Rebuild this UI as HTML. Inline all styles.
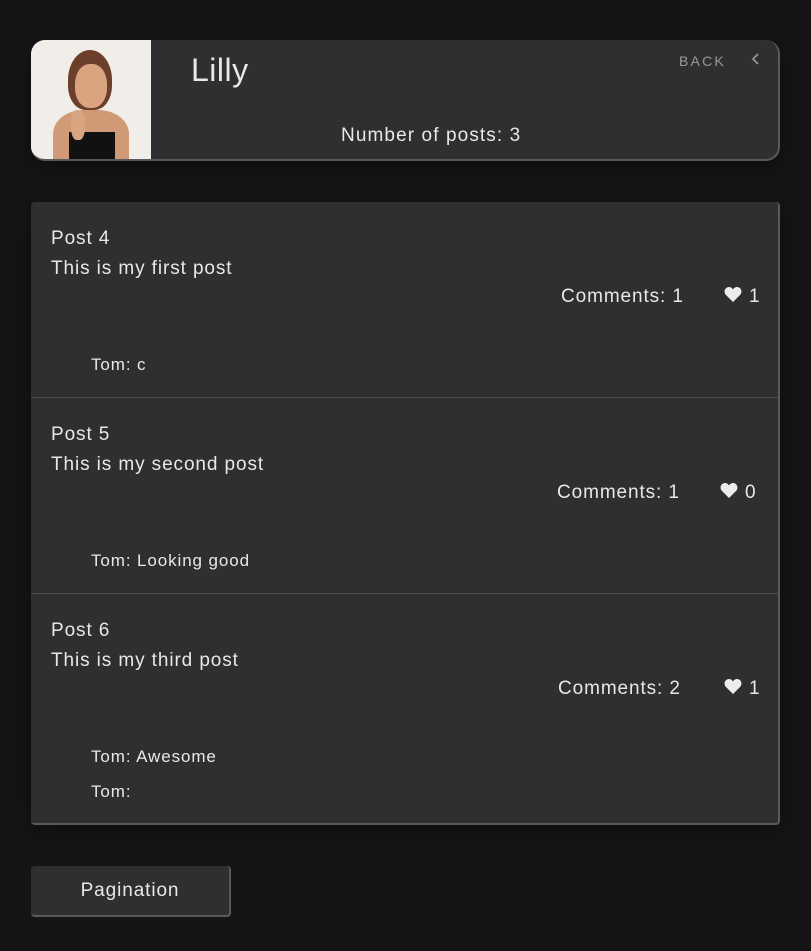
<!DOCTYPE html>
<html><head><style>
body{margin:0;background:#151517;width:811px;height:951px;font-family:"Liberation Sans",sans-serif;color:#e8e8ea;position:relative;overflow:hidden;letter-spacing:0.9px}
.hdr{position:absolute;left:31px;top:40px;width:747px;height:119px;background:#2f2f31;border-radius:14px;border-right:2px solid #5a5a5c;border-bottom:2px solid #5a5a5c;overflow:hidden;box-shadow:0 6px 20px rgba(0,0,0,.4)}
.av{position:absolute;left:0;top:0;width:120px;height:120px;background:#f1eeea;overflow:hidden}
.abs{position:absolute}
.posts{position:absolute;left:31px;top:202px;width:747px;height:621px;background:#2f2f31;border-radius:4px;border-right:2px solid #5a5a5c;border-bottom:2px solid #5a5a5c;box-shadow:0 6px 24px rgba(0,0,0,.4)}
.p{position:absolute;left:0;width:747px;height:195px;border-bottom:1px solid #4a4a4c}
.p .t{position:absolute;left:20px;top:22px;font-size:19px;line-height:30px}
.p .c{position:absolute;top:84px;font-size:19px}
.p .h{position:absolute;top:84px;font-size:19px}
.p .h svg{vertical-align:-1px;margin-right:7px}
.p .cm{position:absolute;left:60px;font-size:17px}
.btn{position:absolute;left:31px;top:866px;width:198px;height:49px;background:#2f2f31;border-radius:4px;border-right:2px solid #5a5a5c;border-bottom:2px solid #5a5a5c;font-size:19px;text-align:center;line-height:49px}
</style></head><body>
<div class="hdr">
 <div class="av">
  <div class="abs" style="left:37px;top:10px;width:44px;height:60px;background:#6b3f2a;border-radius:50% 50% 40% 40%"></div>
  <div class="abs" style="left:44px;top:24px;width:32px;height:44px;background:#d9a47f;border-radius:45%"></div>
  <div class="abs" style="left:22px;top:70px;width:76px;height:60px;background:#d09a76;border-radius:40% 40% 0 0"></div>
  <div class="abs" style="left:38px;top:92px;width:46px;height:40px;background:#111"></div>
  <div class="abs" style="left:40px;top:70px;width:14px;height:30px;background:#d8a580;border-radius:40%"></div>
 </div>
 <div class="abs" style="left:160px;top:12px;font-size:32px;letter-spacing:0.5px">Lilly</div>
 <div class="abs" style="left:310px;top:85px;font-size:19px;letter-spacing:1.1px">Number of posts: 3</div>
 <div class="abs" style="left:648px;top:13px;font-size:14px;color:#9a9a9c;letter-spacing:2.2px">BACK</div>
 <svg class="abs" style="left:720px;top:12px" width="10" height="14"><path d="M7 2 L2 7 L7 12" stroke="#9a9a9c" stroke-width="1.6" fill="none"/></svg>
</div>
<svg width="0" height="0" style="position:absolute"><defs><path id="hrt" d="M9 16 L2 9 C-1 6 1 1 5 1 C7 1 8.3 2.3 9 3.5 C9.7 2.3 11 1 13 1 C17 1 19 6 16 9 Z" fill="#ececee"/></defs></svg>
<div class="posts">
 <div class="p" style="top:0">
  <div class="t">Post 4<br>This is my first post</div>
  <div class="c" style="left:530px">Comments: 1</div>
  <div class="h" style="left:693px"><svg width="18" height="17" viewBox="0 0 18 17"><use href="#hrt"/></svg>1</div>
  <div class="cm" style="top:153px">Tom: c</div>
 </div>
 <div class="p" style="top:196px">
  <div class="t">Post 5<br>This is my second post</div>
  <div class="c" style="left:526px">Comments: 1</div>
  <div class="h" style="left:689px"><svg width="18" height="17" viewBox="0 0 18 17"><use href="#hrt"/></svg>0</div>
  <div class="cm" style="top:153px">Tom: Looking good</div>
 </div>
 <div class="p" style="top:392px;border:none">
  <div class="t">Post 6<br>This is my third post</div>
  <div class="c" style="left:527px">Comments: 2</div>
  <div class="h" style="left:693px"><svg width="18" height="17" viewBox="0 0 18 17"><use href="#hrt"/></svg>1</div>
  <div class="cm" style="top:153px">Tom: Awesome</div>
  <div class="cm" style="top:188px">Tom:</div>
 </div>
</div>
<div class="btn">Pagination</div>
</body></html>
